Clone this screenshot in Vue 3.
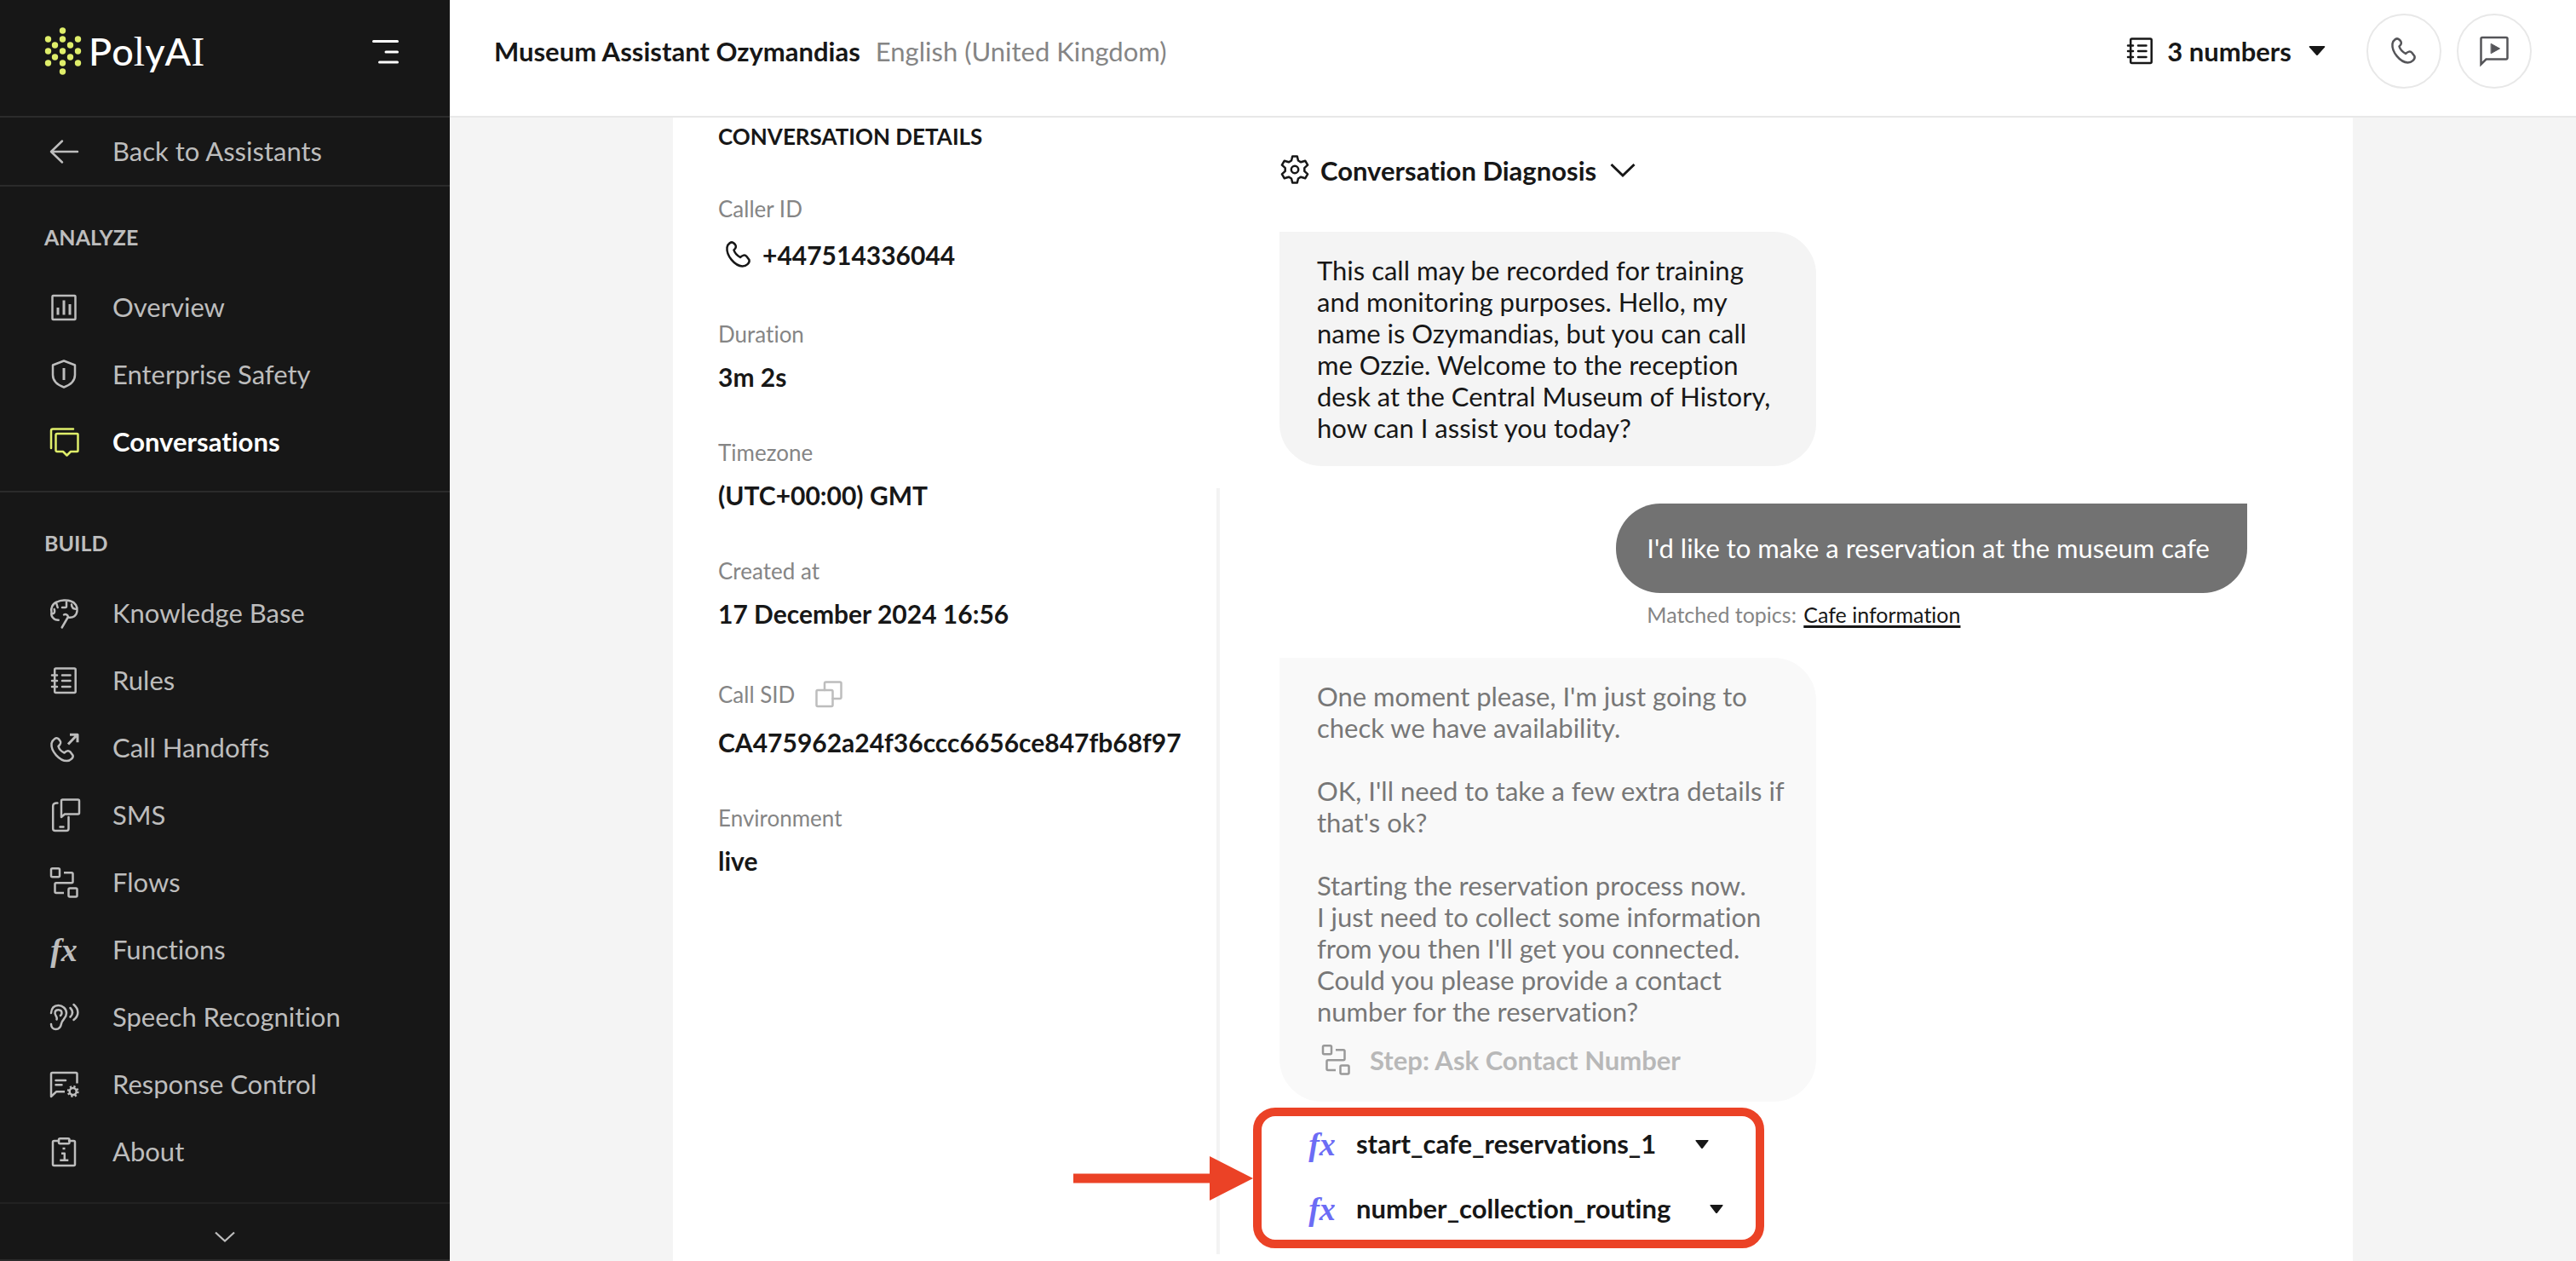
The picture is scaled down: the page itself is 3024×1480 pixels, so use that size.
<script setup>
const icons = {
  back: '<path d="M36 20H5M18 7.500L5 20l13 12.500"/>',
  overview: '<rect x="6.500" y="6" width="27" height="28" rx="1"/><path stroke-width="3" stroke-linecap="butt" d="M13 20v8.500M20 11.500v17M27 16v12.500"/>',
  shield: '<path d="M20 3.500L33 8.500V20c0 8-6 12-13 14.500C13 32 7 28 7 20V8.500z"/><path stroke-width="3" stroke-linecap="butt" d="M20 12v14"/>',
  chats: '<path d="M5 27V6.500A2 2 0 0 1 7 4.500H31"/><path d="M12 10H35.500a1 1 0 0 1 1 1V30a1 1 0 0 1-1 1H28l-4.500 4.500L19 31h-7a1.500 1.500 0 0 1-1.500-1.500V11.500A1.500 1.500 0 0 1 12 10z"/>',
  brain: '<path d="M13.700 27.700C8 28 4.500 23 5.500 19C4 14 7 8 12 6.500C16 4 24 4 28 5.500C33 7 36.500 12 35.500 17C35 22.500 31 25.500 25 24.500M17.700 36.500L25 24C24.500 21.500 22 20.500 20 21.500M23 5v6.500a1.500 1.500 0 0 1-1.500 1.500H18M11 7.500l1.700 5.500M29 9.500c0 4 2.500 5.500 6.500 5.500M8.700 15c1 3 .500 5-2.700 5.500"/>',
  rules: '<rect x="9.200" y="5.500" width="24.500" height="28.500" rx="1.500"/><path d="M6 13.500h6M6 20h6M6 27h6M18 13.500h9.500M18 20h9.500M18 27h9.500"/>',
  handoff: '<path d="M14 9.500C11 6.500 6.500 10 5.500 14.500C4.500 24 15 35 23.500 35C28 35 31.500 31 30.500 28.500L27.500 24.500C25.500 22.500 23 23 20.500 25.500C17 24 14.500 21.500 13.500 18C16.500 15 17 13.500 15.500 11.500z"/><path stroke-linecap="butt" stroke-width="3" d="M25 15.500L35.500 4.500M27 4.200h9v9"/>',
  sms: '<path d="M12.500 5.500C9 5 7.200 7 7.200 9v26.500a2.500 2.500 0 0 0 2.500 2.500H23a2.500 2.500 0 0 0 2.500-2.500V22"/><path d="M18.500 1.500h18a1.500 1.500 0 0 1 1.500 1.500v14a1.500 1.500 0 0 1-1.500 1.500H21l-4 3.500V3a1.500 1.500 0 0 1 1.500-1.500zM15.500 33.500h4"/>',
  flows: '<rect x="5" y="3.200" width="10" height="10" rx="1.500"/><rect x="25.500" y="26.500" width="10" height="10" rx="1.500"/><path stroke-linecap="butt" d="M20 8.300h9a1.500 1.500 0 0 1 1.500 1.500v9a1.500 1.500 0 0 1-1.500 1.500H11a1.500 1.500 0 0 0-1.500 1.500V30.500A1.500 1.500 0 0 0 11 32h9"/>',
  ear: '<path d="M5 15C5.500 9 9 6 13.500 6S23 9.500 23 15c0 6.500-5 7-6 12.500C16 33 13.500 34 10.500 34S5 31.500 5 28"/><path d="M11.500 22.500C13 20 9 17.500 9.500 14.500c.500-4.500 8-4.500 8 .500 0 1.500-.5 2-1.500 3M27.500 9c3.500 3.500 3.500 7 0 10.500M31.500 5c6.500 5.500 6.500 13 0 18"/>',
  response: '<path stroke-linecap="butt" d="M35.500 18.500V7.500a1.500 1.500 0 0 0-1.500-1.500H6.500A1.500 1.500 0 0 0 5 7.500V34l6-5.700h10"/><path d="M10.500 15H22M10.500 20.300h7"/><circle cx="30.700" cy="28" r="4"/><circle cx="30.700" cy="28" r="5.700" stroke-dasharray="2.200 2.276" stroke-linecap="butt"/>',
  about: '<path d="M14 7H8.500A1.500 1.500 0 0 0 7 8.500v26A1.500 1.500 0 0 0 8.500 36h23a1.500 1.500 0 0 0 1.500-1.500v-26A1.500 1.500 0 0 0 31.500 7H26"/><rect x="14" y="4.300" width="12.500" height="6" rx="1.500"/><path stroke-linecap="butt" d="M17 21.700h3.800v8M15.300 29.700h10M18.500 16h3"/>',
  phone: '<path d="M14.500 6.500C11.500 3.500 7 7.500 6.500 11.500C5.500 21 15.500 33 24.500 33.500C29 33.500 33.500 29.500 32.500 26L29.500 22C27.500 19.500 24.500 20.500 22 23C18.500 21 15.500 18 14.500 14.500C17.500 12 17.500 10 16 8z"/>',
  preview: '<path stroke-linejoin="miter" d="M4.500 35.500V5.500a1.500 1.500 0 0 1 1.500-1.500h28a1.500 1.500 0 0 1 1.500 1.500v22.500a1.500 1.500 0 0 1-1.500 1.500H10.500z"/><path fill="currentColor" stroke-width="1" d="M16.500 11.500l10 5.500-10 5.500z"/>',
  copy: '<rect x="5.500" y="15" width="19" height="19" rx="1.500"/><path d="M15 15V7a1.500 1.500 0 0 1 1.500-1.500H33A1.500 1.500 0 0 1 34.500 7v16.500A1.500 1.500 0 0 1 33 25h-8.500"/>',
  gear: '<path d="M17.200 3.500h5.600l1.200 5 3.200 1.800 5-1.600 2.900 4.900-3.800 3.500v3.800l3.800 3.500-2.900 4.900-5-1.600-3.200 1.800-1.200 5h-5.600l-1.200-5-3.200-1.800-5 1.600-2.900-4.900 3.800-3.500v-3.800l-3.800-3.500 2.900-4.900 5 1.600L16 8.500z"/><circle cx="20" cy="19" r="4.200"/>',
}

const analyze = [
  { label: 'Overview', icon: 'overview' },
  { label: 'Enterprise Safety', icon: 'shield' },
  { label: 'Conversations', icon: 'chats', active: true },
]
const build = [
  { label: 'Knowledge Base', icon: 'brain' },
  { label: 'Rules', icon: 'rules' },
  { label: 'Call Handoffs', icon: 'handoff' },
  { label: 'SMS', icon: 'sms' },
  { label: 'Flows', icon: 'flows' },
  { label: 'Functions', icon: 'fx' },
  { label: 'Speech Recognition', icon: 'ear' },
  { label: 'Response Control', icon: 'response' },
  { label: 'About', icon: 'about' },
]
const sections = [
  { title: 'ANALYZE', items: analyze },
  { title: 'BUILD', items: build },
]
const dots = [
  [21, 4], [4, 14], [21, 14], [39, 14], [12, 21], [30, 21], [4, 28], [21, 28],
  [39, 28], [12, 35], [30, 35], [4, 42], [21, 42], [39, 42], [21, 52],
]
const details = [
  { label: 'Caller ID', value: '+447514336044', phone: true },
  { label: 'Duration', value: '3m 2s' },
  { label: 'Timezone', value: '(UTC+00:00) GMT' },
  { label: 'Created at', value: '17 December 2024 16:56' },
  { label: 'Call SID', value: 'CA475962a24f36ccc6656ce847fb68f97', copy: true },
  { label: 'Environment', value: 'live' },
]
const greeting = [
  'This call may be recorded for training',
  'and monitoring purposes. Hello, my',
  'name is Ozymandias, but you can call',
  'me Ozzie. Welcome to the reception',
  'desk at the Central Museum of History,',
  'how can I assist you today?',
].join('\n')
const reply = [
  "One moment please, I'm just going to",
  'check we have availability.',
  '',
  "OK, I'll need to take a few extra details if",
  "that's ok?",
  '',
  'Starting the reservation process now.',
  'I just need to collect some information',
  "from you then I'll get you connected.",
  'Could you please provide a contact',
  'number for the reservation?',
].join('\n')
const calls = ['start_cafe_reservations_1', 'number_collection_routing']
</script>

<template>
  <div class="app">
    <aside class="sidebar">
      <div class="brand">
        <a class="logo" href="#">
          <svg width="44" height="56" viewBox="0 0 43 56" aria-hidden="true">
            <circle v-for="(d, i) in dots" :key="i" :cx="d[0]" :cy="d[1]" r="3.700" fill="#dfee6a" />
          </svg>
          <span class="wordmark">Po<span class="slab">l</span>yA<span class="slab">I</span></span>
        </a>
        <button class="plain menu" aria-label="Collapse menu">
          <svg width="32" height="32" viewBox="0 0 32 32" fill="none" stroke="#fff" stroke-width="3" stroke-linecap="round">
            <path d="M2.500 3.500h28M17 16h13.500M9.500 28h21" />
          </svg>
        </button>
      </div>
      <a class="item back" href="#">
        <svg class="icon" viewBox="0 0 40 40" v-html="icons.back"></svg>Back to Assistants
      </a>
      <nav v-for="s in sections" :key="s.title" class="section">
        <h2>{{ s.title }}</h2>
        <a v-for="it in s.items" :key="it.label" class="item" :class="{ active: it.active }" href="#">
          <span v-if="it.icon === 'fx'" class="fx" aria-hidden="true">fx</span>
          <svg v-else class="icon" viewBox="0 0 40 40" v-html="icons[it.icon]"></svg>
          {{ it.label }}
        </a>
      </nav>
      <button class="plain more" aria-label="Show more">
        <svg width="24" height="14" viewBox="0 0 24 14" fill="none" stroke="currentColor" stroke-width="2.200"><path d="M1 1.500l11 10 11-10" /></svg>
      </button>
    </aside>

    <div class="main">
      <header class="topbar">
        <h1>Museum Assistant Ozymandias</h1>
        <span class="lang">English (United Kingdom)</span>
        <button class="plain numbers">
          <svg class="icon" viewBox="0 0 40 40" v-html="icons.rules"></svg>
          <span>3 numbers</span>
          <svg width="20" height="12" viewBox="0 0 20 12" fill="currentColor"><path d="M1.500 0h17q1.500 0 .5 1.500l-8 9q-1 1-2 0l-8-9Q0 0 1.500 0z" /></svg>
        </button>
        <button class="round" aria-label="Call"><svg class="icon" viewBox="0 0 40 40" v-html="icons.phone"></svg></button>
        <button class="round" aria-label="Chat preview"><svg class="icon" viewBox="0 0 40 40" v-html="icons.preview"></svg></button>
      </header>

      <main class="panel">
        <section class="details">
          <h2>CONVERSATION DETAILS</h2>
          <dl>
            <div v-for="d in details" :key="d.label">
              <dt :class="{ tall: d.copy }">
                {{ d.label }}
                <button v-if="d.copy" class="plain copy" aria-label="Copy Call SID"><svg class="icon" viewBox="0 0 40 40" v-html="icons.copy"></svg></button>
              </dt>
              <dd :class="{ tall: d.phone }">
                <svg v-if="d.phone" class="icon" viewBox="0 0 40 40" v-html="icons.phone"></svg>{{ d.value }}
              </dd>
            </div>
          </dl>
        </section>
        <div class="divider"></div>
        <section class="chat">
          <button class="plain diagnosis">
            <svg class="icon" viewBox="0 0 40 40" v-html="icons.gear"></svg>
            Conversation Diagnosis
            <svg width="30" height="18" viewBox="0 0 30 18" fill="none" stroke="currentColor" stroke-width="3"><path d="M1.500 2l13.500 13 13.500-13" /></svg>
          </button>
          <p class="bubble agent">{{ greeting }}</p>
          <div class="user">
            <p class="bubble">I'd like to make a reservation at the museum cafe</p>
            <p class="topics">Matched topics: <a href="#">Cafe information</a></p>
          </div>
          <div class="bubble agent faded">
            {{ reply }}
            <div class="step"><svg class="icon" viewBox="0 0 40 40" v-html="icons.flows"></svg>Step: Ask Contact Number</div>
          </div>
          <div class="calls">
            <svg class="arrow" viewBox="0 0 211 52" fill="#eb4226" aria-hidden="true"><path d="M0 20.500h160V0l51 26-51 26V31.500H0z" /></svg>
            <button v-for="c in calls" :key="c" class="plain call">
              <span class="fx" aria-hidden="true">fx</span>
              <span>{{ c }}</span>
              <svg width="16" height="10" viewBox="0 0 16 10" fill="currentColor"><path d="M1 0h14q1 0 .5 1L9 9.500q-1 1-2 0L.5 1Q0 0 1 0z" /></svg>
            </button>
          </div>
        </section>
      </main>
    </div>
  </div>
</template>

<style>
body { background: #f4f4f4; }
</style>

<style scoped>
.app { display: flex; min-height: 100vh; font-family: Lato, "Liberation Sans", sans-serif; font-size: 31px; line-height: 37px; font-variant-ligatures: none; color: #171717; }
h1, h2, p, dl, dd { margin: 0; }
a { color: inherit; text-decoration: none; }
.plain { border: 0; padding: 0; background: none; font: inherit; font-variant-ligatures: none; color: inherit; display: flex; align-items: center; }
svg { flex: none; }
.icon { width: 40px; height: 40px; overflow: visible; fill: none; stroke: currentColor; stroke-width: 2.5; stroke-linecap: round; stroke-linejoin: round; }
.fx { width: 40px; flex: none; text-align: center; font: italic bold 38px/40px "Liberation Serif", serif; }

.sidebar { width: 528px; flex: none; display: flex; flex-direction: column; background: #171717; color: #bdbdbd; }
.brand { height: 136px; border-bottom: 2px solid #2b2b2b; display: flex; align-items: flex-start; justify-content: space-between; padding: 0 60px 0 52px; }
.logo { display: flex; align-items: center; gap: 8px; height: 120px; color: #fff; }
.wordmark { font-size: 45px; line-height: 48px; font-weight: 500; font-kerning: none; }
.slab { font-family: "Liberation Serif", serif; font-size: 48px; line-height: 48px; }
.menu { height: 122px; }
.item { display: flex; align-items: center; gap: 37px; height: 79px; padding-left: 55px; }
.back { border-bottom: 2px solid #2b2b2b; }
.section { padding: 43px 0 18px; border-bottom: 2px solid #2b2b2b; }
.section:last-of-type { border: 0; padding-bottom: 0; }
.section h2 { margin: 0 0 27px 52px; font-size: 25px; line-height: 32px; font-weight: 700; }
.active { color: #fff; font-weight: 700; }
.active .icon { color: #dfee6a; }
.more { margin-top: auto; height: 69px; justify-content: center; border-top: 2px solid #222; border-bottom: 2px solid #2b2b2b; padding-top: 12px; }

.main { flex: 1; min-width: 0; display: flex; flex-direction: column; background: #f4f4f4; }
.topbar { height: 120px; padding: 0 52px 16px; border-bottom: 2px solid #e8e8e8; background: #fff; display: flex; align-items: center; gap: 18px; }
h1 { font-size: 31px; line-height: 37px; font-weight: 700; }
.lang { color: #858585; }
.numbers { margin-left: auto; margin-right: 30px; gap: 12px; font-weight: 700; }
.numbers > :last-child { margin-left: 8px; }
.round { width: 88px; height: 88px; border: 2px solid #e8e8e8; border-radius: 50%; background: #fff; color: #555559; padding: 0; display: flex; align-items: center; justify-content: center; }

.panel { flex: 1; margin: 0 262px; background: #fff; display: flex; }
.details { width: 549px; flex: none; padding: 6px 36px 0 53px; }
.details h2 { font-size: 26px; line-height: 32px; font-weight: 700; }
dl { display: flex; flex-direction: column; gap: 55px; margin-top: 53px; }
dt { display: flex; align-items: center; gap: 20px; height: 32px; margin-bottom: 16px; font-size: 26px; color: #858585; }
dd { display: flex; align-items: center; gap: 8px; height: 36px; font-size: 30px; font-weight: 700; overflow: hidden; white-space: nowrap; }
dt.tall, dd.tall { height: 44px; }
dd .icon { margin-left: 4px; }
.copy { color: #bdbdbd; }
.divider { width: 4px; flex: none; margin: 435px 0 8px; background: #f3f3f3; }
.chat { flex: 1; min-width: 0; padding: 38px 124px 0 70px; display: flex; flex-direction: column; align-items: flex-start; }
.diagnosis { height: 48px; gap: 10px; margin-left: -2px; font-weight: 700; }
.diagnosis > :last-child { margin-left: 6px; }
.bubble { white-space: pre-line; }
.agent { box-sizing: border-box; width: 630px; margin-top: 48px; padding: 27px 24px 26px 44px; border-radius: 0 50px 50px 50px; background: #f4f4f4; }
.user { align-self: flex-end; margin-top: 44px; }
.user .bubble { padding: 34px 44px 34px 36px; border-radius: 52px 0 52px 52px; background: #727272; color: #fff; }
.topics { margin: 7px 0 0 36px; font-size: 25px; color: #858585; }
.topics a { margin-left: 2px; color: #171717; text-decoration: underline; text-decoration-thickness: 3px; text-underline-offset: 3px; }
.faded { margin-top: 32px; padding-bottom: 29px; background: #f9f9f9; color: #777; }
.step { display: flex; align-items: center; gap: 20px; height: 40px; margin-top: 18px; padding-left: 2px; font-weight: 700; color: #b8b8b8; }
.step .icon { color: #999; }
.calls { position: relative; box-sizing: border-box; width: 600px; height: 165px; margin: 7px 0 15px -31px; padding: 0 20px 4px 51px; border: 10px solid #eb4226; border-radius: 26px; display: flex; flex-direction: column; justify-content: center; }
.call { height: 76px; flex: none; gap: 20px; font-weight: 700; }
.call .fx { color: #6c6cf5; }
.call > :last-child { margin-left: 26px; }
.arrow { position: absolute; right: 100%; top: 50%; width: 211px; height: 52px; margin: -26px 10px 0 0; }
</style>
